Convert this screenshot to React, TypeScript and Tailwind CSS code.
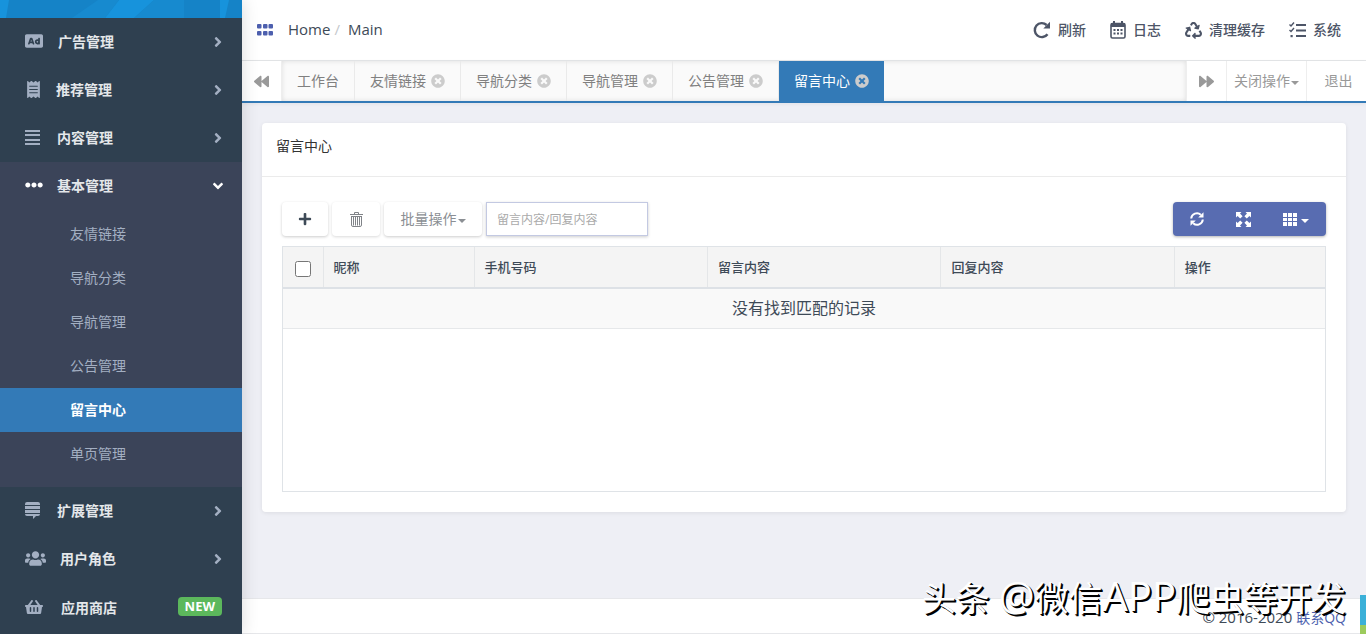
import { useState } from 'react';
import type { ReactNode } from 'react';
import {
  FaAd,
  FaAngleDown,
  FaAngleRight,
  FaBackward,
  FaEllipsisH,
  FaForward,
  FaPlus,
  FaReceipt,
  FaRecycle,
  FaShoppingBasket,
  FaTimesCircle,
  FaUsers,
} from 'react-icons/fa';

const LinesIcon = () => (
  <svg width="15" height="15" viewBox="0 0 15 15" fill="currentColor" aria-hidden="true">
    <path d="M0 0h15v2H0zM0 4h15v2H0zM0 9h15v2H0zM0 13h15v2H0z" />
  </svg>
);

const StackIcon = () => (
  <svg width="15" height="17" viewBox="0 0 15 17" fill="currentColor" aria-hidden="true">
    <path d="M2 0h11a2 2 0 0 1 2 2v1H0V2a2 2 0 0 1 2-2zM0 4h15v3H0zM0 8h15v3H0zM0 12h15a2 2 0 0 1-2 2h-2l-3 3v-3H2a2 2 0 0 1-2-2z" />
  </svg>
);

const ReloadIcon = () => (
  <svg width="18" height="18" viewBox="0 0 18 18" fill="none" aria-hidden="true">
    <path d="M14.500 13.200A7 7 0 1 1 13.600 4" stroke="currentColor" strokeWidth="2.4" />
    <path d="M17 .8V7.500H10.300z" fill="currentColor" />
  </svg>
);

const CalendarIcon = () => (
  <svg width="16" height="18" viewBox="0 0 16 18" fill="none" aria-hidden="true">
    <rect x="1" y="2.500" width="14" height="14.500" rx="1.500" stroke="currentColor" strokeWidth="1.600" />
    <path d="M1 2h14v4H1zM3 0h2v3H3zM11 0h2v3h-2z" fill="currentColor" />
    <path
      d="M3.500 8h2v2h-2zM7 8h2v2H7zM10.500 8h2v2h-2zM3.500 11.500h2v2h-2zM7 11.500h2v2H7zM10.500 11.500h2v2h-2z"
      fill="currentColor"
    />
  </svg>
);

const ChecklistIcon = () => (
  <svg width="17" height="16" viewBox="0 0 17 16" fill="none" aria-hidden="true">
    <path d="M7 3h10M7 8.500h10M7 14h10" stroke="currentColor" strokeWidth="1.800" />
    <path d="M.5 2.500 2 4l3-3.500M.5 8 2 9.500 5 6" stroke="currentColor" strokeWidth="1.400" />
    <path d="M1.500 13h2.200v2.200H1.500z" fill="currentColor" />
  </svg>
);

const AppsIcon = () => (
  <svg width="16" height="12" viewBox="0 0 16 12" fill="currentColor" aria-hidden="true">
    <rect width="4.500" height="4.500" rx="1" />
    <rect x="6" width="4.500" height="4.500" rx="1" />
    <rect x="11.500" width="4.500" height="4.500" rx="1" />
    <rect y="7" width="4.500" height="4.500" rx="1" />
    <rect x="6" y="7" width="4.500" height="4.500" rx="1" />
    <rect x="11.500" y="7" width="4.500" height="4.500" rx="1" />
  </svg>
);

const TrashIcon = () => (
  <svg width="13" height="15" viewBox="0 0 13 15" fill="none" stroke="currentColor" aria-hidden="true">
    <path d="M0 2.500h13M4.500 2V.5h4V2M1.500 4.500h10" />
    <path d="M1.500 4v9a1.500 1.500 0 0 0 1.500 1.500h7a1.500 1.500 0 0 0 1.500-1.500V4M3.500 4.500v9M5.500 4.500v9M7.500 4.500v9M9.500 4.500v9" />
  </svg>
);

const SyncIcon = () => (
  <svg width="14" height="14" viewBox="0 0 14 14" fill="none" aria-hidden="true">
    <path d="M1.200 6.500A5.700 5.700 0 0 1 10.800 2.800M12.800 7.500A5.700 5.700 0 0 1 3.200 11.200" stroke="currentColor" strokeWidth="2" />
    <path d="M13.500.2V5.600H8.200zM.5 13.800V8.400h5.300z" fill="currentColor" />
  </svg>
);

const FullscreenIcon = () => (
  <svg width="15" height="15" viewBox="0 0 15 15" fill="currentColor" aria-hidden="true">
    <path d="M0 0h5.500L4 1.600l2.600 2.600-2.400 2.400L1.600 4 0 5.500zM15 0v5.500L13.400 4l-2.600 2.600-2.400-2.400L11 1.600 9.500 0zM0 15V9.500L1.600 11l2.600-2.600 2.400 2.400L4 13.400 5.500 15zM15 15H9.500l1.500-1.600-2.600-2.600 2.400-2.400L13.400 11 15 9.500z" />
  </svg>
);

const GridIcon = () => (
  <svg width="14" height="13" viewBox="0 0 14 13" fill="currentColor" aria-hidden="true">
    <path d="M0 0h4v4H0zM5 0h4v4H5zM10 0h4v4h-4zM0 5h4v3H0zM5 5h4v3H5zM10 5h4v3h-4zM0 9h4v4H0zM5 9h4v4H5zM10 9h4v4h-4z" />
  </svg>
);

const Caret = () => <span className="mt-1 border-x-4 border-t-4 border-x-transparent border-t-current" />;

type Item = { label: string; icon: ReactNode; box: string; children?: string[]; badge?: string };

const menu: Item[] = [
  { label: '广告管理', icon: <FaAd size={18} />, box: 'w-[17px]' },
  { label: '推荐管理', icon: <FaReceipt size={17} />, box: 'w-[15px]' },
  { label: '内容管理', icon: <LinesIcon />, box: 'w-4' },
  {
    label: '基本管理',
    icon: <FaEllipsisH size={18} />,
    box: 'w-4',
    children: ['友情链接', '导航分类', '导航管理', '公告管理', '留言中心', '单页管理'],
  },
  { label: '扩展管理', icon: <StackIcon />, box: 'w-4' },
  { label: '用户角色', icon: <FaUsers size={21} />, box: 'w-[19px]' },
  { label: '应用商店', icon: <FaShoppingBasket size={18} />, box: 'w-5', badge: 'NEW' },
];

const tabs = ['工作台', '友情链接', '导航分类', '导航管理', '公告管理', '留言中心'];

const actions = [
  { label: '刷新', icon: <ReloadIcon /> },
  { label: '日志', icon: <CalendarIcon /> },
  { label: '清理缓存', icon: <FaRecycle size={17} /> },
  { label: '系统', icon: <ChecklistIcon /> },
];

const columns = ['昵称', '手机号码', '留言内容', '回复内容', '操作'];

function Sidebar({ active, onSelect }: { active: string; onSelect: (name: string) => void }) {
  return (
    <aside className="relative z-10 w-[242px] shrink-0 overflow-hidden bg-[#2f4050] shadow-[0_0_16px_rgba(0,0,0,0.15)]">
      <svg className="block h-[18px] w-full" viewBox="0 0 242 18" preserveAspectRatio="none" aria-hidden="true">
        <path fill="#1583c7" d="M0 0h242v18H0z" />
        <path fill="#1793dc" d="M0 0h9L6 18H0zM119 0h35l-20 18h-29zM220 0h9l-4 18h-5z" />
        <path fill="#178acf" d="M98 0h21l-14 18H72zM154 0h30v18h-50z" />
      </svg>
      <nav>
        {menu.map((item) => (
          <div key={item.label} className={item.children ? 'bg-[#3b4459] pb-[11px]' : ''}>
            <a
              href="#"
              className={`flex items-center gap-4 pr-5 pl-[25px] text-sm font-bold text-[#e4e7ea] ${item.badge ? 'h-[50px]' : 'h-12'}`}
            >
              <span className={`${item.box} mb-0.5 flex shrink-0 ${item.children ? 'text-white' : 'text-[#a3afc2]'}`}>
                <span className="shrink-0">{item.icon}</span>
              </span>
              <span className="flex-1">{item.label}</span>
              {item.badge ? (
                <span className="mb-1 rounded-sm bg-[#5cb85c] px-[7px] text-[13px] leading-[19px] font-bold text-white">{item.badge}</span>
              ) : item.children ? (
                <FaAngleDown size={16} className="-mr-1 text-white" />
              ) : (
                <FaAngleRight size={16} className="-mr-1 text-[#a3afc2]" />
              )}
            </a>
            {item.children && (
              <ul className="pt-0.5">
                {item.children.map((name) => (
                  <li key={name}>
                    <a
                      href="#"
                      onClick={() => onSelect(name)}
                      className={`flex h-[44px] items-center pl-[70px] text-sm ${
                        name === active ? 'bg-[#337ab7] font-bold text-white' : 'text-[#a3afc2]'
                      }`}
                    >
                      {name}
                    </a>
                  </li>
                ))}
              </ul>
            )}
          </div>
        ))}
      </nav>
    </aside>
  );
}

export default function App() {
  const [active, setActive] = useState('留言中心');

  return (
    <div className="relative flex h-screen overflow-hidden bg-[#eeeff5] font-['Open_Sans','Noto_Sans_CJK_SC',sans-serif] text-sm text-[#3e4a57]">
      <Sidebar active={active} onSelect={setActive} />

      <div className="flex min-w-0 flex-1 flex-col">
        {/* Top bar */}
        <header className="flex h-[61px] shrink-0 items-center justify-between border-b border-[#e4e6e8] bg-white pr-[25px] pl-[15px]">
          <div className="flex items-center">
            <button aria-label="菜单" className="mr-[15px] text-[#4d5fae]">
              <AppsIcon />
            </button>
            <a href="#" className="text-[15px]">Home</a>
            <span className="mx-1 text-[15px] text-[#c4c8cc]">/</span>
            <a href="#" className="ml-1 text-[15px]">Main</a>
          </div>
          <div className="flex items-center gap-6 font-medium text-[#4d5567]">
            {actions.map((a) => (
              <a key={a.label} href="#" className="flex items-center gap-[7px]">
                {a.icon}
                {a.label}
              </a>
            ))}
          </div>
        </header>

        {/* Page tabs */}
        <div className="flex h-[42px] shrink-0 border-b-2 border-[#337ab7] bg-[#fafafa] text-[#808080] shadow-[0_1px_4px_rgba(0,0,0,0.06)]">
          <button aria-label="向左" className="flex w-10 items-center justify-center border-r border-[#eee] bg-white text-[#999]">
            <FaBackward size={15} />
          </button>
          <div className="flex flex-1 shadow-[inset_0_0_5px_rgba(0,0,0,0.12)]">
            {tabs.map((tab, i) => (
              <div
                key={tab}
                className={`flex items-center gap-[5px] px-[15px] ${
                  tab === active ? 'bg-[#337ab7] text-white' : 'border-r border-[#eaeaea]'
                }`}
              >
                <button onClick={() => setActive(tab)}>{tab}</button>
                {i > 0 && (
                  <button aria-label={`关闭${tab}`} className="text-[#ccc]">
                    <FaTimesCircle size={14} />
                  </button>
                )}
              </div>
            ))}
          </div>
          <button aria-label="向右" className="flex w-10 items-center justify-center border-l border-[#eee] bg-white text-[#999]">
            <FaForward size={15} />
          </button>
          <button className="flex w-20 items-center justify-center gap-px border-l border-[#eee] bg-white text-[#999]">
            关闭操作
            <Caret />
          </button>
          <button className="w-[60px] border-l border-[#eee] bg-white pl-1 text-[#999]">退出</button>
        </div>

        {/* Content */}
        <main className="flex-1 p-5">
          <section className="rounded-sm bg-white shadow-[0_1px_4px_rgba(0,0,0,0.08)]">
            <h1 className="h-[54px] border-b border-[#ebebeb] px-3.5 pt-3 text-sm leading-[22px] text-[#333]">{active}</h1>
            <div className="px-5 pt-[25px] pb-5">
              <div className="mb-2.5 flex items-center justify-between">
                <div className="flex gap-1">
                  <button aria-label="新增" className="flex h-[34px] w-[46px] items-center justify-center rounded-sm bg-white shadow-[0_1px_3px_rgba(0,0,0,0.2)]">
                    <FaPlus size={14} />
                  </button>
                  <button aria-label="删除" className="flex h-[34px] w-12 items-center justify-center rounded-sm bg-white text-[#808388] shadow-[0_1px_3px_rgba(0,0,0,0.15)]">
                    <TrashIcon />
                  </button>
                  <button className="flex h-[34px] w-[98px] items-center justify-center gap-px rounded-sm bg-white text-[#8b8f94] shadow-[0_1px_3px_rgba(0,0,0,0.2)]">
                    批量操作
                    <Caret />
                  </button>
                  <input
                    type="text"
                    aria-label="搜索"
                    placeholder="留言内容/回复内容"
                    className="h-[34px] w-[162px] border border-[#c3c9e2] bg-white px-2.5 text-xs shadow-[0_1px_3px_rgba(0,0,0,0.2)] outline-none placeholder:text-[#aaa]"
                  />
                </div>
                <div className="flex h-[34px] rounded-sm bg-[#586cb1] text-white shadow-[0_1px_3px_rgba(0,0,0,0.3)]">
                  <button aria-label="刷新" className="flex w-[47px] items-center justify-center">
                    <SyncIcon />
                  </button>
                  <button aria-label="全屏" className="flex w-[46px] items-center justify-center">
                    <FullscreenIcon />
                  </button>
                  <button aria-label="列" className="flex w-[60px] items-center justify-center gap-1">
                    <GridIcon />
                    <Caret />
                  </button>
                </div>
              </div>

              <div className="h-[246px] border border-[#dfe3e7]">
                <table className="w-full table-fixed border-collapse">
                  <colgroup>
                    <col className="w-10" />
                    <col className="w-[14.5%]" />
                    <col className="w-[22.4%]" />
                    <col className="w-[22.4%]" />
                    <col className="w-[22.4%]" />
                    <col />
                  </colgroup>
                  <thead>
                    <tr className="h-[41px] border-b-2 border-[#dde1e6] bg-[#f4f4f4]">
                      <th className="border-r border-[#e4e6e8] pt-1">
                        <input type="checkbox" aria-label="全选" className="mx-auto block size-4" />
                      </th>
                      {columns.map((c) => (
                        <th key={c} className="border-r border-[#e4e6e8] px-2.5 text-left text-[13px] font-medium last:border-r-0">
                          {c}
                        </th>
                      ))}
                    </tr>
                  </thead>
                  <tbody>
                    <tr className="h-10 border-b border-[#e6e8ea] bg-[#f9f9f9]">
                      <td colSpan={6} className="text-center text-base">没有找到匹配的记录</td>
                    </tr>
                  </tbody>
                </table>
              </div>
            </div>
          </section>
        </main>

        <footer className="flex h-9 shrink-0 items-center justify-end gap-1 border-y border-[#e6e7ea] bg-white px-5 pt-1">
          <span className="text-[15px]">© 2016-2020</span>
          <a href="#" className="text-[#4d5fae]">联系QQ</a>
        </footer>
      </div>

      {/* Corner tag and overlay caption */}
      <div className="absolute right-0 bottom-0 z-20 flex h-[39px] w-1.5 flex-col">
        <span className="flex-1 bg-[#3bb0d8]" />
        <span className="h-[9px] bg-[#9ccb5c]" />
      </div>
      <div className="pointer-events-none absolute right-5 bottom-2 z-20 text-[34px] leading-[56px] whitespace-nowrap text-white [text-shadow:1px_1px_0_#000,2px_2px_0_#000]">
        头条 <span className="text-[40px]">@</span>微信<span className="text-[40px]">APP</span>爬虫等开发
      </div>
    </div>
  );
}
